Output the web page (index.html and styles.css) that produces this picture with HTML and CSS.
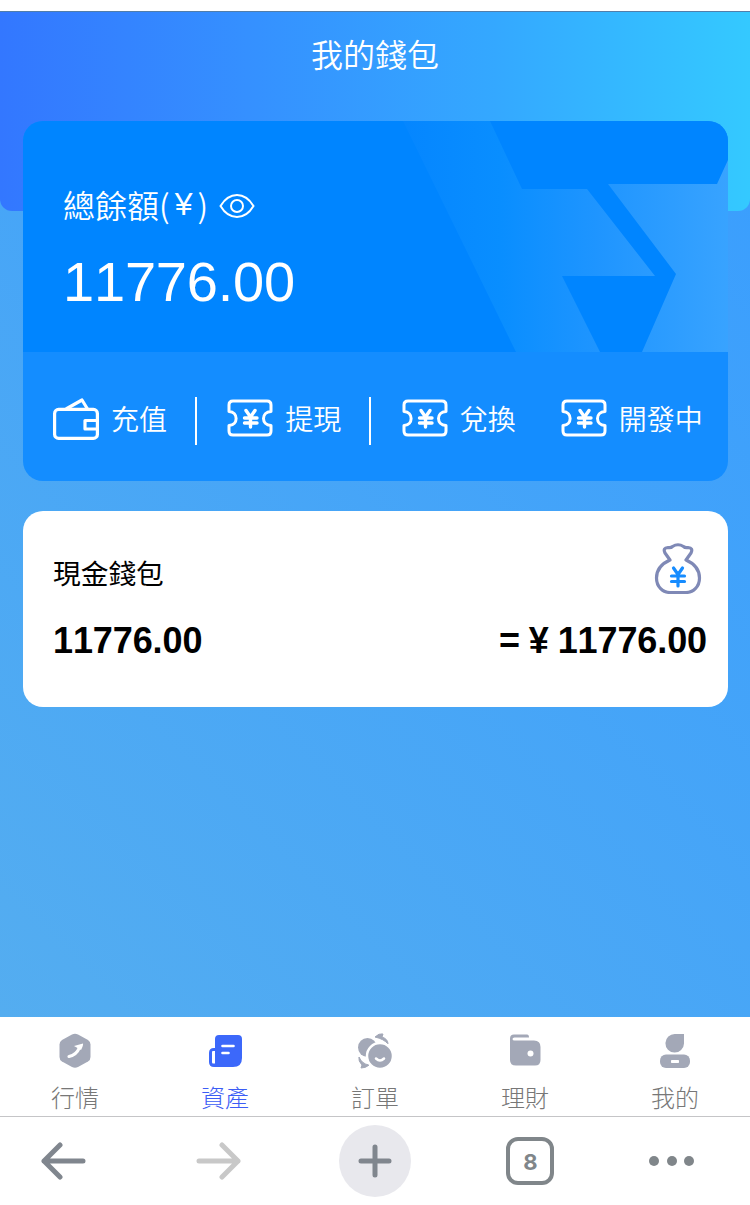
FILE: index.html
```html
<!DOCTYPE html>
<html lang="zh-Hant">
<head>
<meta charset="utf-8">
<title>我的錢包</title>
<link rel="stylesheet" href="styles.css">
</head>
<body>
<svg width="0" height="0" class="defs" aria-hidden="true">
  <symbol id="ticket" viewBox="0 0 46 38">
    <g fill="none" stroke="#fff" stroke-width="3" stroke-linecap="round" stroke-linejoin="round">
      <path d="M6 2H40Q44 2 44 6V12.500C34 13 34 26 44 26.500V32Q44 36 40 36H6Q2 36 2 32V26.500C11.500 26 11.500 13 2 12.500V6Q2 2 6 2Z"/>
      <path stroke-width="3.400" d="M19 11.500L23.500 18L28 11.500M17.500 19H30M17.500 24H30M23.500 18V28"/>
    </g>
  </symbol>
</svg>
<main class="page">
  <section class="wallet">
    <header class="header"><h1 class="title">我的錢包</h1></header>
    <div class="card">
      <div class="balance">
        <svg class="pattern" viewBox="0 0 350 231">
          <defs><linearGradient id="fade" gradientUnits="userSpaceOnUse" x1="25" y1="0" x2="350" y2="0"><stop offset="0" stop-color="#0586ff"/><stop offset=".3" stop-color="#098eff"/><stop offset=".6" stop-color="#1f95ff"/><stop offset="1" stop-color="#38a3ff"/></linearGradient></defs>
          <path d="M25 0H112L144 68H209L277 155H184L222 231H138Z" fill="url(#fade)"/>
          <path d="M230 63H339L350 39V231H264L298 153Z" fill="url(#fade)"/>
        </svg>
        <div class="balance-label">總餘額(<span class="yen">¥</span>)
          <svg class="eye" viewBox="0 0 36 26" fill="none" stroke="#fff" stroke-width="2"><path d="M1.500 13C6 5.500 11.500 2 18 2C24.500 2 30 5.500 34.500 13C30 20.500 24.500 24 18 24C11.500 24 6 20.500 1.500 13Z"/><circle cx="18" cy="13" r="6"/></svg>
        </div>
        <div class="balance-value">11776.00</div>
      </div>
      <nav class="actions">
        <a class="action deposit"><svg class="action-icon wallet-icon" viewBox="0 0 46 42" fill="none" stroke="#fff" stroke-width="3.200" stroke-linejoin="round"><rect x="1.600" y="11.400" width="42.800" height="29" rx="4"/><path d="M13 11L29 2L34.500 11M44 22.500H32V31H44"/></svg><span>充值</span></a>
        <i class="divider"></i>
        <a class="action withdraw"><svg class="action-icon"><use href="#ticket"/></svg><span>提現</span></a>
        <i class="divider"></i>
        <a class="action exchange"><svg class="action-icon"><use href="#ticket"/></svg><span>兌換</span></a>
        <a class="action developing"><svg class="action-icon"><use href="#ticket"/></svg><span>開發中</span></a>
      </nav>
    </div>
    <section class="cash">
      <div class="cash-head"><span>現金錢包</span>
        <svg class="bag" viewBox="0 0 48 52" fill="none" stroke-linecap="round" stroke-linejoin="round"><path d="M16 18L11 11Q8.500 6 14 5.500Q17 6 18.500 4.500Q24 1 29.500 4.500Q31 6 34 5.500Q39.500 6 37 11L32 18C41 22 45.500 29 45.500 36C45.500 45 39 50.500 32 50.500H16C9 50.500 2.500 45 2.500 36C2.500 29 7 22 16 18Z" stroke="#7f89b6" stroke-width="3.200"/><path d="M19.500 26L24 32.500L28.500 26M17.500 34H30.500M17.500 39.500H30.500M24 32.500V44" stroke="#168cff" stroke-width="3.200"/></svg>
      </div>
      <div class="cash-values"><span>11776.00</span><span>= ¥ 11776.00</span></div>
    </section>
  </section>
  <nav class="tabs">
    <a class="tab"><svg viewBox="0 0 36 36"><path d="M15 1.500Q18 0 21 1.500L31 7Q33.500 8.500 33.500 11.500V24Q33.500 27 31 28.500L21 34Q18 35.500 15 34L5 28.500Q2.500 27 2.500 24V11.500Q2.500 8.500 5 7Z" fill="#a3a8b7"/><path d="M12 23.500Q19.500 22 22.500 14.500" fill="none" stroke="#fff" stroke-width="3.200" stroke-linecap="round"/><path d="M17 13L26 10.500Q26.500 12 24 17Z" fill="#fff"/></svg><span>行情</span></a>
    <a class="tab active"><svg viewBox="0 0 36 36"><path d="M12 2H31Q35 2 35 6V25Q35 34 26 34H7Q2 34 2 29V20Q2 15 7 15H8V6Q8 2 12 2Z" fill="#3c68fa"/><path d="M6 18H8V30.500H6Q5 30.500 5 29V19Q5 18 6 18Z" fill="#fff"/><path d="M15.500 13H26.500M15.500 20H21.500" stroke="#fff" stroke-width="2.600" stroke-linecap="round"/></svg><span>資產</span></a>
    <a class="tab"><svg viewBox="0 0 36 36"><circle cx="10.500" cy="14.500" r="9.500" fill="#a3a8b7"/><path d="M18 4Q22 0 26 1L25 4Q31 6 31 11Q27 6 18 4ZM2 24Q5 31 12 32Q9 35 4 35L5 32Q1 28 2 24Z" fill="#a3a8b7" stroke="#a3a8b7" stroke-linejoin="round"/><circle cx="23" cy="23" r="13" fill="#a3a8b7" stroke="#fff" stroke-width="2.500"/><path d="M19 25.500Q23 29.500 27 25.500" fill="none" stroke="#fff" stroke-width="2.500" stroke-linecap="round"/></svg><span>訂單</span></a>
    <a class="tab"><svg viewBox="0 0 36 36"><path d="M7 1.500H20Q22 1.500 22 4.500H7.500Q5.500 4.500 5.500 6Q5.500 7.500 7.500 7.500H27Q33.500 7.500 33.500 14V27Q33.500 32.500 28 32.500H9Q3 32.500 3 27V5.500Q3 1.500 7 1.500Z" fill="#a3a8b7"/><circle cx="23.500" cy="20.500" r="3" fill="#fff"/></svg><span>理財</span></a>
    <a class="tab"><svg viewBox="0 0 36 36"><path d="M18 1H27V10.500A9.300 9.300 0 1 1 18 1Z" fill="#a3a8b7"/><rect x="3" y="21.500" width="30" height="13.500" rx="6" fill="#a3a8b7"/><rect x="14" y="27" width="8" height="3" rx=".7" fill="#fff"/></svg><span>我的</span></a>
  </nav>
</main>
<footer class="browser-bar">
  <svg class="back" viewBox="0 0 46 38"><path d="M20 3L4 19L20 35M4 19H43"/></svg>
  <svg class="forward" viewBox="0 0 46 38"><path d="M26 3L42 19L26 35M42 19H3"/></svg>
  <span class="plus"><svg viewBox="0 0 34 34"><path d="M17 3V31M3 17H31"/></svg></span>
  <span class="tab-count">8</span>
  <span class="more"><i></i><i></i><i></i></span>
</footer>
</body>
</html>
```
FILE: styles.css
```css
* { box-sizing: border-box; }
body { margin: 0; height: 1205px; overflow: hidden; background: #fff; font-family: "Liberation Sans", "Noto Sans CJK TC", sans-serif; font-kerning: none; }
svg { display: block; flex: none; }
.defs { position: absolute; }
.page { padding-top: 11px; }
.wallet { height: 1006px; background: linear-gradient(45deg, #54adf0, #389dff); border-top: 1px solid #527eaa; }
.header { height: 199px; border-radius: 0 0 12px 12px; background: linear-gradient(90deg, #3377ff, #3590ff 33%, #34a8ff 66%, #34c9ff); }
.title { margin: 0; padding-top: 21px; color: #fff; font-size: 32px; line-height: 46px; font-weight: 350; text-align: center; }
.card { width: 705px; height: 360px; margin: -90px 0 0 23px; border-radius: 20px; overflow: hidden; position: relative; background: #148dff; }
.balance { height: 231px; background: #0085ff; color: #fff; padding: 60px 40px 0; }
.pattern { position: absolute; right: 0; top: 0; width: 350px; height: 231px; }
.balance-label { display: flex; align-items: center; height: 50px; font-family: "Noto Sans CJK TC", sans-serif; font-size: 32px; line-height: 46px; font-weight: 350; padding-bottom: 4px; }
.yen { width: 28px; text-align: center; font-family: "Liberation Sans", sans-serif; }
.eye { width: 36px; height: 26px; margin: 4px 0 0 11px; }
.balance-value { margin-top: 18px; font-size: 56px; line-height: 66px; letter-spacing: -.2px; }
.actions { height: 129px; display: flex; align-items: center; padding: 8px 0 0 30px; color: #fff; font-size: 28px; font-weight: 350; }
.action { display: flex; align-items: center; gap: 12px; height: 48px; white-space: nowrap; }
.action span { line-height: 42px; }
.action-icon { width: 46px; height: 38px; margin-top: -5px; }
.wallet-icon { height: 42px; margin-top: -3px; }
.divider { width: 2px; height: 48px; background: #fff; margin: 0 30.300px 0 28px; }
.developing { margin-left: 45px; }
.cash { width: 705px; height: 196px; margin: 30px 0 0 23px; padding: 31px 21px 0 30px; border-radius: 20px; background: #fff; color: #000; }
.cash-head { display: flex; justify-content: space-between; height: 64px; font-size: 27.700px; line-height: 66px; padding-right: 5px; }
.bag { width: 48px; height: 52px; }
.cash-values { display: flex; justify-content: space-between; margin-top: 12px; font-size: 36px; line-height: 46px; font-weight: 700; letter-spacing: -.1px; word-spacing: -1px; }
.tabs { height: 99px; display: grid; grid-template-columns: repeat(5, 1fr); background: #fff; }
.tab { display: flex; flex-direction: column; align-items: center; padding-top: 16px; color: #777; font-size: 24px; font-weight: 300; line-height: 34px; }
.tab svg { width: 36px; height: 36px; margin-bottom: 13px; }
.active { color: #3c5df5; }
.browser-bar { height: 89px; border-top: 1px solid #c5c5c7; background: #fff; display: flex; align-items: center; }
.browser-bar svg { fill: none; stroke: #80868e; stroke-width: 5; stroke-linecap: round; stroke-linejoin: round; }
.back, .forward { width: 46px; height: 38px; }
.back { margin-left: 40px; }
.browser-bar .forward { margin-left: 110px; stroke: #c8c8c8; }
.plus { display: flex; align-items: center; justify-content: center; width: 72px; height: 72px; margin-left: 97px; border-radius: 50%; background: #e8e8ed; }
.plus svg { width: 34px; height: 34px; }
.tab-count { width: 48px; height: 48px; margin-left: 95px; border: 4px solid #80868a; border-radius: 12px; color: #80868a; font: 700 22px/42px Inter, sans-serif; text-align: center; padding-left: 1px; }
.more { display: flex; gap: 7.500px; margin-left: 95px; }
.more i { width: 10px; height: 10px; border-radius: 50%; background: #80868a; }
```
